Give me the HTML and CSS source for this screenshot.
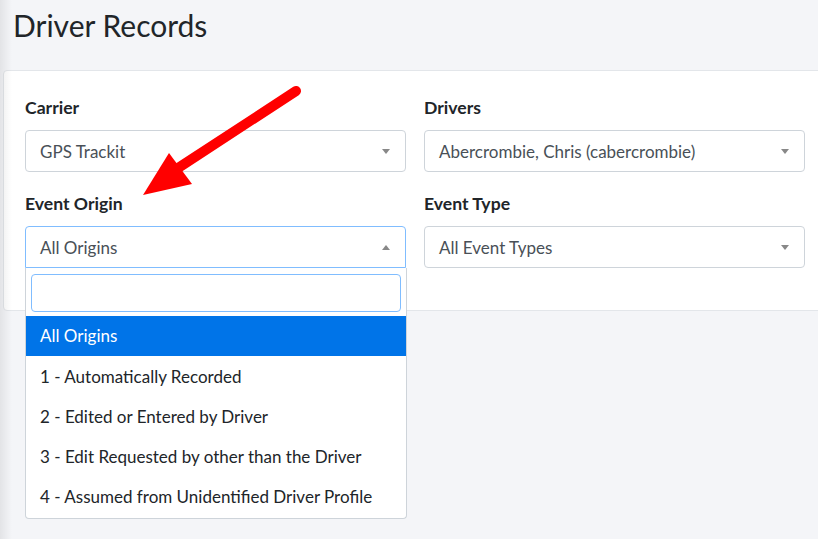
FILE: index.html
```html
<!DOCTYPE html>
<html lang="en">
<head>
    <meta charset="UTF-8">
    <meta name="viewport" content="width=device-width, initial-scale=1.0">
    <title>Driver Records</title>
    <link rel="stylesheet" href="styles.css">
</head>
<body>

    <!-- Page Title -->
    <h1 class="page-title">Driver Records</h1>

    <!-- Filter Card -->
    <div class="card">
        <div class="filter-grid">
            <div class="form-group">
                <label>Carrier</label>
                <div class="select-box">
                    <span class="select-value">GPS Trackit</span>
                    <span class="caret"></span>
                </div>
            </div>

            <div class="form-group">
                <label>Drivers</label>
                <div class="select-box">
                    <span class="select-value">Abercrombie, Chris (cabercrombie)</span>
                    <span class="caret"></span>
                </div>
            </div>

            <div class="form-group">
                <label>Event Origin</label>
                <div class="select-wrap">
                    <div class="select-box open">
                        <span class="select-value">All Origins</span>
                        <span class="caret up"></span>
                    </div>

                    <!-- Open dropdown -->
                    <div class="dropdown">
                        <div class="dropdown-search">
                            <input type="text">
                        </div>
                        <ul class="dropdown-options">
                            <li class="active">All Origins</li>
                            <li>1 - Automatically Recorded</li>
                            <li>2 - Edited or Entered by Driver</li>
                            <li>3 - Edit Requested by other than the Driver</li>
                            <li>4 - Assumed from Unidentified Driver Profile</li>
                        </ul>
                    </div>
                </div>
            </div>

            <div class="form-group">
                <label>Event Type</label>
                <div class="select-box">
                    <span class="select-value">All Event Types</span>
                    <span class="caret"></span>
                </div>
            </div>
        </div>
    </div>

    <!-- Annotation arrow -->
    <svg class="annotation" width="818" height="539" viewBox="0 0 818 539">
        <line x1="296" y1="91" x2="172" y2="172" stroke="#ff0000" stroke-width="10" stroke-linecap="round"/>
        <polygon points="169,153 192,184 143,195" fill="#ff0000"/>
    </svg>

</body>
</html>
```

FILE: styles.css
```css
* {
    margin: 0;
    padding: 0;
    box-sizing: border-box;
}

body {
    font-family: 'Lato', sans-serif;
    font-size: 17px;
    color: #212529;
    background-color: #f4f5f8;
    width: 818px;
    height: 539px;
    overflow: hidden;
    position: relative;
}

body::before {
    content: '';
    position: absolute;
    left: 0;
    top: 0;
    bottom: 0;
    width: 12px;
    background: linear-gradient(to right, rgba(0, 0, 0, 0.07), rgba(0, 0, 0, 0));
    z-index: 5;
}

/* Title */
.page-title {
    font-weight: 400;
    font-size: 30px;
    line-height: 38px;
    padding: 6px 13px 26px;
    color: #212529;
}

/* Card */
.card {
    margin-left: 3px;
    width: 824px;
    background-color: #fff;
    border: 1px solid #e3e6ea;
    border-radius: 4px;
    padding: 25px 21px 22px;
}

.filter-grid {
    display: grid;
    grid-template-columns: 381px 381px;
    column-gap: 18px;
}

.form-group {
    margin-bottom: 20px;
}

.form-group label {
    display: block;
    font-size: 17.6px;
    font-weight: 700;
    line-height: 24px;
    margin-bottom: 10px;
}

/* Select */
.select-wrap {
    position: relative;
}

.select-box {
    height: 42px;
    border: 1px solid #ced4da;
    border-radius: 4px;
    display: flex;
    align-items: center;
    padding: 0 14px;
    color: #495057;
    background-color: #fff;
}

.select-box.open {
    border-color: #80bdff;
    border-bottom-left-radius: 0;
    border-bottom-right-radius: 0;
}

.select-value {
    flex: 1;
}

.caret {
    width: 0;
    height: 0;
    border-left: 4px solid transparent;
    border-right: 4px solid transparent;
    border-top: 5px solid #888;
    margin-right: 1px;
}

.caret.up {
    border-top: none;
    border-bottom: 5px solid #888;
}

/* Dropdown */
.dropdown {
    position: absolute;
    left: 0;
    top: 42px;
    width: 382px;
    background-color: #fff;
    border: 1px solid #ced4da;
    border-top: none;
    border-radius: 0 0 4px 4px;
    z-index: 10;
}

.dropdown-search {
    padding: 6px 5px 4px;
}

.dropdown-search input {
    width: 100%;
    height: 38px;
    border: 1px solid #80bdff;
    border-radius: 4px;
    outline: none;
}

.dropdown-options {
    list-style: none;
    padding-bottom: 2px;
}

.dropdown-options li {
    padding: 8px 14px;
    line-height: 24px;
    color: #212529;
}

.dropdown-options li + li {
    padding-top: 9px;
    padding-bottom: 7px;
}

.dropdown-options li.active {
    background-color: #0074e8;
    color: #fff;
}

/* Annotation arrow */
.annotation {
    position: absolute;
    left: 0;
    top: 0;
    z-index: 20;
}
```
